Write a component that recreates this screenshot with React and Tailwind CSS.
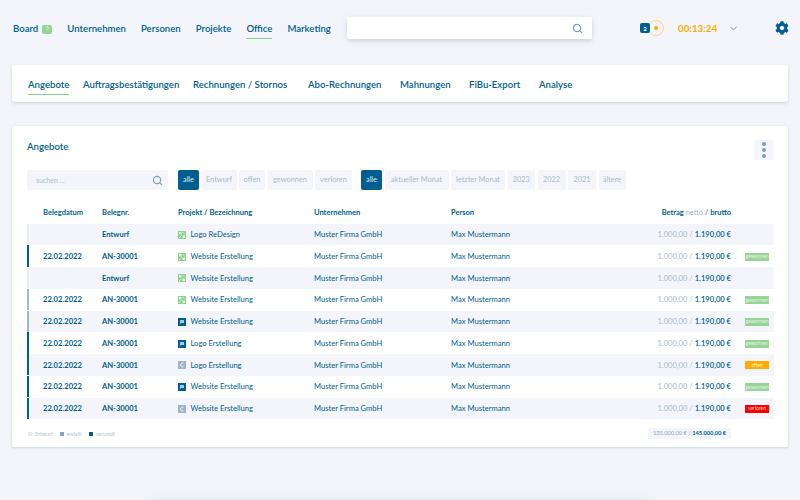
import React from 'react';
import { Search, ChevronDown } from 'lucide-react';
import { FaCog } from 'react-icons/fa';

const mainNav = ['Unternehmen', 'Personen', 'Projekte', 'Office', 'Marketing'];
const subNav = [
  ['Angebote', 'w-[55px]'],
  ['Auftragsbestätigungen', 'w-[110px]'],
  ['Rechnungen / Stornos', 'w-[115px]'],
  ['Abo-Rechnungen', 'w-[92px]'],
  ['Mahnungen', 'w-[69px]'],
  ['FiBu-Export', 'w-[70px]'],
  ['Analyse', 'w-auto'],
];
const statusFilters = [
  ['Entwurf', 'w-[35px]'],
  ['offen', 'w-[26px]'],
  ['gewonnen', 'w-[45px]'],
  ['verloren', 'w-[37px]'],
];
const dateFilters = [
  ['aktueller Monat', 'w-[64px]'],
  ['letzter Monat', 'w-[54px]'],
  ['2023', 'w-[27.5px]'],
  ['2022', 'w-[28px]'],
  ['2021', 'w-[28px]'],
  ['ältere', 'w-[27px]'],
];

const rows = [
  { date: '', nr: 'Entwurf', icon: 'green', title: 'Logo ReDesign', bar: 'bg-[#e8edf3]' },
  { date: '22.02.2022', nr: 'AN-30001', icon: 'green', title: 'Website Erstellung', bar: 'bg-[#005f8f]', status: 'gewonnen' },
  { date: '', nr: 'Entwurf', icon: 'green', title: 'Website Erstellung', bar: 'bg-[#e8edf3]' },
  { date: '22.02.2022', nr: 'AN-30001', icon: 'green', title: 'Website Erstellung', bar: 'bg-[#9fb8ca]', status: 'gewonnen' },
  { date: '22.02.2022', nr: 'AN-30001', icon: 'blue', title: 'Website Erstellung', bar: 'bg-[#9fb8ca]', status: 'gewonnen' },
  { date: '22.02.2022', nr: 'AN-30001', icon: 'blue', title: 'Logo Erstellung', bar: 'bg-[#005f8f]', status: 'gewonnen' },
  { date: '22.02.2022', nr: 'AN-30001', icon: 'gray', title: 'Logo Erstellung', bar: 'bg-[#005f8f]', status: 'offen' },
  { date: '22.02.2022', nr: 'AN-30001', icon: 'blue', title: 'Website Erstellung', bar: 'bg-[#005f8f]', status: 'gewonnen' },
  { date: '22.02.2022', nr: 'AN-30001', icon: 'gray', title: 'Website Erstellung', bar: 'bg-[#005f8f]', status: 'verloren' },
];

function ProjectIcon({ type }) {
  if (type === 'green') {
    return (
      <svg width="8" height="8" viewBox="0 0 8 8" className="shrink-0">
        <rect width="8" height="8" fill="#8fd08f" />
        <path d="M1 1h2.5v2.5H1zM4.5 4.5H7V7H4.5z" fill="#e4f4e4" />
        <path d="M4.5 1L7 3.5M3.5 4.5L1 7" stroke="#e4f4e4" strokeWidth="0.8" />
      </svg>
    );
  }
  if (type === 'blue') {
    return (
      <svg width="8" height="8" viewBox="0 0 8 8" className="shrink-0">
        <rect width="8" height="8" fill="#005f8f" />
        <path d="M2 2h4v3H3.2L2 6z" fill="#a9c8da" />
      </svg>
    );
  }
  return (
    <svg width="8" height="8" viewBox="0 0 8 8" className="shrink-0">
      <rect width="8" height="8" fill="#9fb5c5" />
      <path d="M5.5 2.2A2 2 0 1 0 5.5 5.8" fill="none" stroke="#eef3f7" strokeWidth="1" />
    </svg>
  );
}

function StatusBadge({ status }) {
  if (!status) return null;
  const color = {
    gewonnen: 'bg-[#97d597] text-[#e3f3e3]',
    offen: 'bg-[#ffab00] text-[#fff3d0]',
    verloren: 'bg-[#ff0000] text-[#ffd8d8]',
  }[status];
  return (
    <div className={`ml-[14px] w-6 h-2 flex items-center justify-center text-[5px] leading-none ${color}`}>
      {status}
    </div>
  );
}

function FilterButton({ label, width, active }) {
  return (
    <div className={`${width} h-5 flex items-center justify-center rounded-[2px] text-[7.4px] ${active ? 'bg-[#005f8f] text-[#dbe9f1]' : 'bg-[#f3f5fa] text-[#a9bccb]'}`}>
      {label}
    </div>
  );
}

export default function App() {
  return (
    <div className="relative w-[800px] h-[500px] overflow-hidden bg-[#f3f5fa] font-['Lato',sans-serif] text-[#005f8f]">
      {/* Top bar */}
      <div className="h-[65px] flex items-start">
        <div className="w-[347px] pl-[13px] pt-[22px] flex items-center text-[9.6px] font-semibold">
          <span>Board</span>
          <span className="ml-[4px] w-[10px] h-[9px] rounded-[2px] bg-[#97d597] text-[#e3f3e3] text-[5px] flex items-center justify-center">5</span>
          {mainNav.map(item => (
            <span
              key={item}
              className={`ml-[15px] ${item === 'Office' ? 'border-b border-[#8fd08f] -mb-[3px] pb-[2px]' : ''}`}
            >
              {item}
            </span>
          ))}
        </div>
        <div className="mt-[17px] w-[245px] h-[22px] bg-white rounded-[2px] shadow-[0_2px_5px_rgba(90,110,130,0.25)] flex items-center justify-end pr-[9px]">
          <Search size={11} strokeWidth={2.8} className="text-[#7fa3ba]" />
        </div>
        <div className="ml-[48px] mt-[20px] flex items-center">
          <div className="z-10 w-[10px] h-[10px] rounded-[2px] bg-[#005f8f] text-white text-[6px] font-bold flex items-center justify-center">2</div>
          <div className="-ml-[2px] w-4 h-4 rounded-full border border-[#ffd48a] flex items-center justify-center">
            <div className="w-1 h-1 bg-[#ffab00] rounded-full" />
          </div>
          <span className="ml-[14px] text-[9.8px] font-bold text-[#ffab00]">00:13:24</span>
          <ChevronDown size={11} strokeWidth={2.4} className="ml-[11px] text-[#9db5c6]" />
          <FaCog size={14} className="ml-[36px] text-[#005f8f]" />
        </div>
      </div>

      {/* Sub navigation */}
      <div className="mx-3 h-[37px] bg-white rounded-[2px] shadow-[0_1px_3px_rgba(90,110,130,0.25)] pl-[16px] pt-[3px] flex items-center text-[9.6px] font-semibold">
        {subNav.map(([item, width], i) => (
          <div key={item} className={`${width} shrink-0 whitespace-nowrap`}>
            <span className={i === 0 ? 'inline-block border-b border-[#8fd08f] pb-[2px] -mb-[3px]' : ''}>{item}</span>
          </div>
        ))}
      </div>

      {/* Main card */}
      <div className="mx-3 mt-6 h-[321px] bg-white rounded-[2px] shadow-[0_1px_3px_rgba(90,110,130,0.25)] pl-[15px] pr-[14px]">
        <div className="h-[44px] pt-[14px] flex items-start justify-between">
          <span className="text-[9.6px] font-semibold">Angebote</span>
          <div className="w-5 h-5 bg-[#f3f5fa] rounded-[2px] flex flex-col items-center justify-center gap-[2px]">
            <span className="w-[4px] h-[4px] rounded-full bg-[#7d9db4]" />
            <span className="w-[4px] h-[4px] rounded-full bg-[#7d9db4]" />
            <span className="w-[4px] h-[4px] rounded-full bg-[#7d9db4]" />
          </div>
        </div>

        {/* Filters */}
        <div className="flex items-center">
          <div className="w-[141px] h-5 bg-[#f3f5fa] rounded-[2px] pl-[9px] pr-[5px] flex items-center justify-between text-[7px] text-[#a9bccb]">
            <span>suchen ...</span>
            <Search size={11} strokeWidth={2.6} className="text-[#7fa3ba]" />
          </div>
          <div className="ml-[10px] flex gap-[2.5px]">
            <FilterButton label="alle" width="w-[21px]" active />
            {statusFilters.map(([f, w]) => <FilterButton key={f} label={f} width={w} />)}
          </div>
          <div className="ml-[9px] flex gap-[2.5px]">
            <FilterButton label="alle" width="w-[21px]" active />
            {dateFilters.map(([f, w]) => <FilterButton key={f} label={f} width={w} />)}
          </div>
        </div>

        {/* Table */}
        <div className="mt-[13px] h-[20.5px] pb-[2px] grid grid-cols-[59px_76px_136px_137px_130px_1fr_43px] items-center pl-4 text-[7.5px] font-bold">
          <span>Belegdatum</span>
          <span>Belegnr.</span>
          <span>Projekt / Bezeichnung</span>
          <span>Unternehmen</span>
          <span>Person</span>
          <span className="text-right">Betrag <span className="font-normal text-[#9db5c6]">netto</span> <span className="font-normal">/</span> brutto</span>
          <span />
        </div>
        <div>
          {rows.map((row, i) => (
            <div
              key={i}
              className={`relative h-[21.75px] pt-[1px] grid grid-cols-[59px_76px_136px_137px_130px_1fr_43px] items-center pl-4 text-[7.6px] ${i % 2 === 0 ? 'bg-[#f3f5fa]' : 'bg-white'}`}
            >
              <div className={`absolute left-0 top-0 bottom-[0.5px] w-[2px] ${row.bar}`} />
              <span className="font-bold">{row.date}</span>
              <span className="font-bold">{row.nr}</span>
              <span className="flex items-center gap-[4.5px]">
                <ProjectIcon type={row.icon} />
                {row.title}
              </span>
              <span>Muster Firma GmbH</span>
              <span>Max Mustermann</span>
              <span className="text-right">
                <span className="text-[#a9bccb]">1.000,00 / </span>
                <span className="font-semibold">1.190,00 €</span>
              </span>
              <StatusBadge status={row.status} />
            </div>
          ))}
        </div>

        {/* Footer */}
        <div className="mt-[9px] flex items-center justify-between pr-[43px]">
          <div className="flex items-center pt-[1px] text-[5px] text-[#b5c5d2]">
            <span className="ml-[1px] w-1 h-1 bg-[#e3e9ef]" />
            <span className="ml-[3px]">Entwurf</span>
            <span className="ml-[7px] w-1 h-1 bg-[#8ba6ba]" />
            <span className="ml-[3px]">erstellt</span>
            <span className="ml-[7px] w-1 h-1 bg-[#005f8f]" />
            <span className="ml-[3px]">versandt</span>
          </div>
          <div className="h-[11px] px-[5px] bg-[#f3f5fa] flex items-center text-[5.7px] text-[#8ba6ba]">
            135.000,00 € /&nbsp;<span className="font-bold text-[#005f8f]">145.000,00 €</span>
          </div>
        </div>
      </div>

      {/* Panel peeking in at the bottom edge */}
      <div className="absolute left-[150px] top-[503px] w-[500px] h-5 bg-white shadow-[0_0_8px_rgba(90,110,130,0.35)]" />
    </div>
  );
}
